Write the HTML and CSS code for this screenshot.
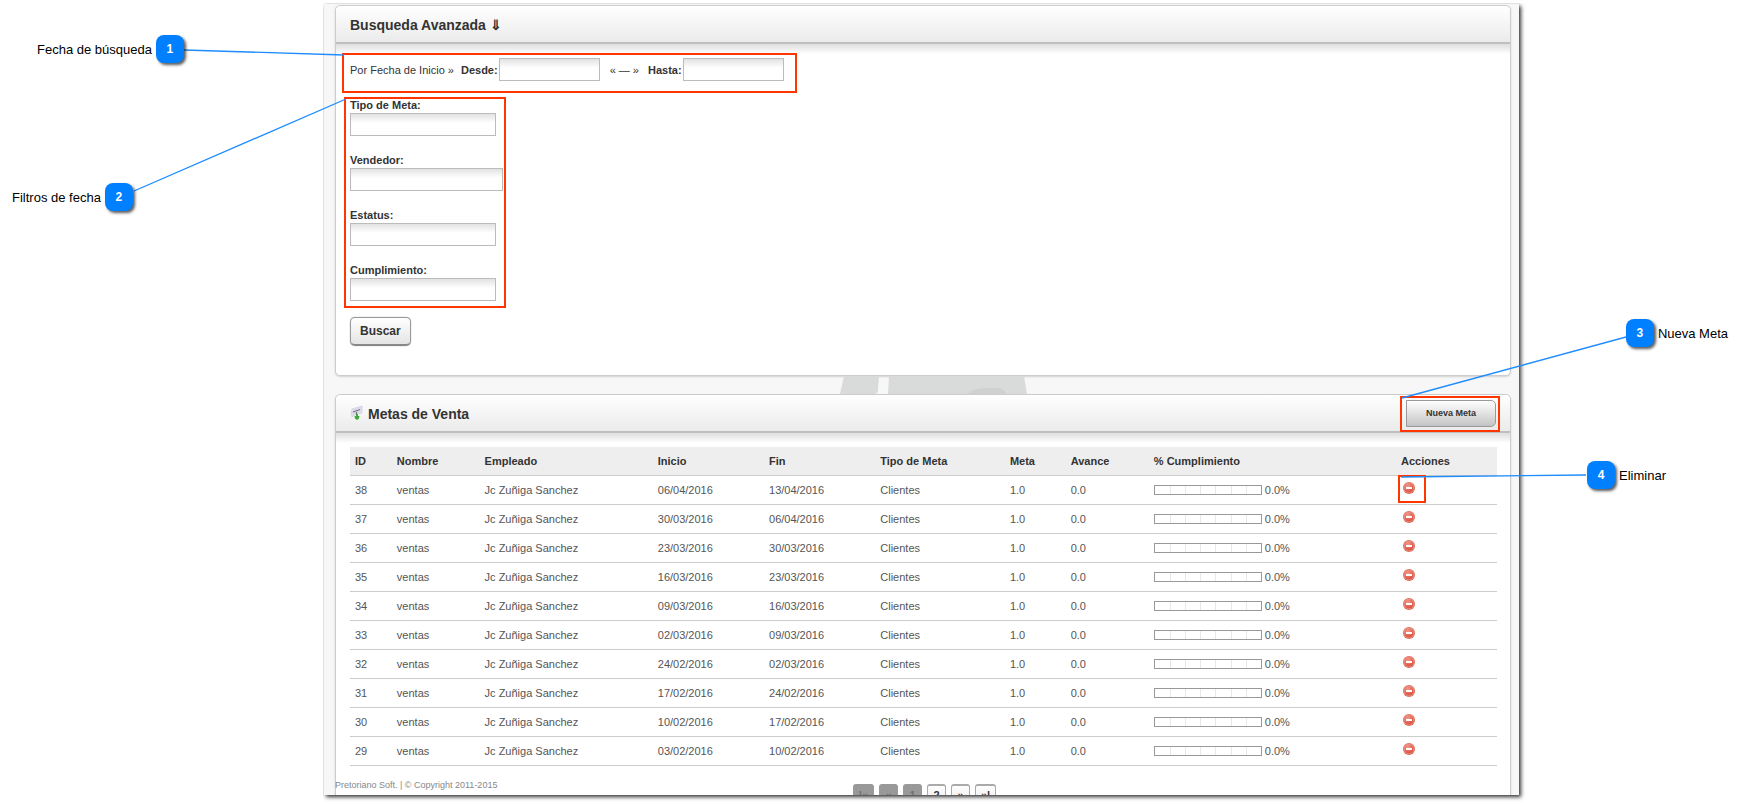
FILE: index.html
```
<!DOCTYPE html>
<html lang="es">
<head>
<meta charset="utf-8">
<title>Metas de Venta</title>
<link rel="stylesheet" href="styles.css">
</head>
<body>
<svg class="defs" width="0" height="0" aria-hidden="true">
  <defs>
    <radialGradient id="red" cx="0.4" cy="0.3" r="0.8">
      <stop offset="0" stop-color="#f29a8e"/><stop offset="0.6" stop-color="#e2604f"/><stop offset="1" stop-color="#d04a3c"/>
    </radialGradient>
    <symbol id="remove" viewBox="0 0 12 12">
      <circle cx="6" cy="6" r="6" fill="#d9614f"/>
      <circle cx="6" cy="6" r="5" fill="url(#red)" stroke="#f3b3a8" stroke-width="0.6"/>
      <rect x="3" y="5" width="6" height="2" fill="#fff"/>
    </symbol>
  </defs>
</svg>

<main class="frame">
  <section class="panel">
    <header class="panel-head"><h2>Busqueda Avanzada ⇓</h2></header>
    <form class="panel-body search">
      <div class="dates">
        <span>Por Fecha de Inicio »</span>
        <label class="desde" for="desde">Desde:</label>
        <input class="date" id="desde" type="text">
        <span class="sep">« — »</span>
        <label class="hasta" for="hasta">Hasta:</label>
        <input class="date" id="hasta" type="text">
        <span class="mark mark-dates"></span>
      </div>
      <div class="filters">
        <div class="field"><label for="tipo">Tipo de Meta:</label><select id="tipo"></select></div>
        <div class="field wide"><label for="vendedor">Vendedor:</label><select id="vendedor"></select></div>
        <div class="field"><label for="estatus">Estatus:</label><select id="estatus"></select></div>
        <div class="field"><label for="cumplimiento">Cumplimiento:</label><select id="cumplimiento"></select></div>
        <span class="mark mark-filters"></span>
      </div>
      <button class="submit" type="button">Buscar</button>
    </form>
  </section>

  <div class="gap">
    <svg width="188" height="18" viewBox="0 0 188 18" aria-hidden="true">
      <path d="M4 0H39L38 14Q38 18 34 18H0Z" fill="#d9dbda"/>
      <path d="M49 0H184L187 18H48Z" fill="#d9dbda"/>
      <path d="M127 18Q135 12 146 12H158Q165 13 166 18Z" fill="#cfd0cf"/>
    </svg>
  </div>

  <section class="panel">
    <header class="panel-head">
      <svg class="title-icon" width="14" height="16" viewBox="0 0 14 16" aria-hidden="true">
        <path d="M2 4L12 1V8L6 9L2 12L1 8Z" fill="#dcdcec" stroke="#d0d0e2" stroke-width="0.8"/>
        <path d="M3 7L10 4.5M6.5 7V10" stroke="#777" stroke-width="1.2" fill="none"/>
        <path d="M6 9H8V11H9.5L9 13.5L7 15L5 13.5L4.5 11H6Z" fill="#3daa35"/>
      </svg>
      <h2>Metas de Venta</h2>
      <div class="new-wrap">
        <button class="new" type="button">Nueva Meta</button>
        <span class="mark mark-new"></span>
      </div>
    </header>
    <div class="panel-body">
      <table>
        <colgroup><col class="c-id"><col class="c-name"><col class="c-emp"><col class="c-date"><col class="c-date"><col class="c-type"><col class="c-goal"><col class="c-adv"><col class="c-pct"><col></colgroup>
        <thead><tr><th>ID</th><th>Nombre</th><th>Empleado</th><th>Inicio</th><th>Fin</th><th>Tipo de Meta</th><th>Meta</th><th>Avance</th><th>% Cumplimiento</th><th>Acciones</th></tr></thead>
        <tbody id="rows"></tbody>
      </table>
      <nav class="pager" aria-label="Paginación">
        <button type="button" disabled>|«</button>
        <button type="button" disabled>«</button>
        <button type="button" disabled>1</button>
        <button type="button">2</button>
        <button type="button">»</button>
        <button type="button">»|</button>
      </nav>
    </div>
  </section>
  <footer class="foot">Pretoriano Soft. | © Copyright 2011-2015</footer>
</main>

<svg class="lines lines-left" width="360" height="220" aria-hidden="true">
  <path d="M184 50L344 55M134 191L346 99"/>
</svg>
<svg class="lines lines-right" width="343" height="500" aria-hidden="true">
  <path d="M226 337L2 398M186 475L1 477"/>
</svg>
<div class="note note-1"><span>Fecha de búsqueda</span><b>1</b></div>
<div class="note note-2"><span>Filtros de fecha</span><b>2</b></div>
<div class="note note-3"><b>3</b><span>Nueva Meta</span></div>
<div class="note note-4"><b>4</b><span>Eliminar</span></div>
<script src="rows.js"></script>
</body>
</html>
```

FILE: styles.css
```
* { box-sizing: border-box; }
body {
  margin: 0;
  height: 100vh;
  padding: 4px 224px 9px 324px;
  position: relative;
  overflow: hidden;
  background: #fff;
  color: #333;
  font: 11px/14px "Liberation Sans", Arial, sans-serif;
}
.defs { position: absolute; }
.frame {
  position: relative;
  height: 100%;
  overflow: hidden;
  padding: 1px 8px 0 11px;
  background: #f7f7f7;
}
body::before {
  content: "";
  position: absolute;
  inset: 4px 224px 9px 324px;
  box-shadow: 2px 2px 4px rgba(0, 0, 0, 0.8), 0 0 1px rgba(0, 0, 0, 0.2);
  clip-path: inset(-1px -10px -10px -1px);
}
.panel {
  border: 1px solid #ccc;
  border-radius: 5px;
  background: #fff;
  box-shadow: 0 1px 2px rgba(0, 0, 0, 0.15);
}
.panel-head {
  display: flex;
  align-items: center;
  height: 38px;
  padding: 0 14px;
  border-bottom: 2px solid #bfbfbf;
  border-radius: 5px 5px 0 0;
  background: linear-gradient(#fff, #ebebeb);
}
h2 { margin: 0; padding-top: 2px; font-size: 14px; line-height: 18px; }
.title-icon { margin-right: 4px; }
.panel-body {
  padding: 14px 13px 14px 14px;
  background: linear-gradient(#dedede, #fff 10px);
  border-radius: 0 0 5px 5px;
}
.search {
  display: flex;
  flex-direction: column;
  align-items: flex-start;
  padding-bottom: 29px;
}
.dates { position: relative; display: flex; align-items: center; margin-bottom: 17px; }
label { font-weight: bold; }
.desde { margin: 0 1px 0 7px; }
.sep { margin: 0 9px 0 10px; }
.hasta { margin-right: 1px; }
.date, select {
  appearance: none;
  height: 23px;
  margin: 0;
  padding: 0 4px;
  border: 1px solid #bbb;
  border-radius: 0;
  background: linear-gradient(#e2e2e2, #fff 9px);
  font: inherit;
}
.date { width: 101px; }
.filters { position: relative; display: grid; gap: 17px; margin-bottom: 16px; width: 153px; }
.field { display: flex; flex-direction: column; width: 146px; }
.field label { line-height: 15px; }
.wide { width: 153px; }
.mark { position: absolute; border: 2px solid #ff3600; pointer-events: none; }
.mark-dates { inset: -5px -13px -12px -8px; }
.mark-filters { inset: -1px -3px -7px -6px; }
.mark-new { inset: -4px -4px -5px -6px; }
.mark-delete { inset: -7px -11px -9px -5px; }
.submit {
  height: 29px;
  padding: 0 9px;
  border: 1px solid #999;
  border-bottom: 2px solid #888;
  border-radius: 5px;
  background: linear-gradient(#fff, #e4e4e4);
  box-shadow: 0 0 1px #777;
  color: #333;
  font: bold 12px/16px "Liberation Sans", Arial, sans-serif;
}
.gap { display: flex; justify-content: center; height: 18px; padding-left: 22px; }
.new-wrap { position: relative; display: flex; margin-left: auto; }
.new {
  width: 90px;
  height: 27px;
  padding: 0;
  border: 1px solid #999;
  border-radius: 0 5px 5px 0;
  background: linear-gradient(#fff, #c4c4c4);
  color: #333;
  font: bold 9px/12px "Liberation Sans", Arial, sans-serif;
}
table { width: 100%; table-layout: fixed; border-collapse: separate; border-spacing: 0; }
.c-id { width: 3.65%; }
.c-name { width: 7.65%; }
.c-emp { width: 15.1%; }
.c-date { width: 9.7%; }
.c-type { width: 11.3%; }
.c-goal { width: 5.3%; }
.c-adv { width: 7.25%; }
.c-pct { width: 21.55%; }
th, td { height: 29px; padding: 0 5px; border-bottom: 1px solid #ccc; text-align: left; vertical-align: middle; }
th { background: #eee; }
td { color: #555; }
.progress { display: flex; align-items: center; gap: 3px; }
.bar {
  display: grid;
  grid-template-columns: repeat(7, 1fr);
  width: 108px;
  height: 10px;
  border: 1px solid #999;
}
.bar i + i { border-left: 1px solid #e8e8e8; }
.delete {
  position: relative;
  display: block;
  width: 12px;
  height: 12px;
  margin: 0 0 4px 2px;
  padding: 0;
  border: 0;
  background: none;
}
.delete svg { display: block; }
.pager { display: flex; justify-content: center; gap: 5px; margin-top: 18px; padding-left: 2px; }
.pager button {
  min-width: 19px;
  height: 20px;
  padding: 0 5px;
  border: 1px solid #aaa;
  border-top-width: 2px;
  border-radius: 3px;
  background: linear-gradient(#fff, #e8e8e8);
  color: #333;
  font: bold 11px/14px "Liberation Sans", Arial, sans-serif;
}
.pager button:disabled { border-color: #999; background: #999; color: #707070; }
.foot { position: absolute; left: 11px; bottom: 4px; color: #888; font-size: 9px; line-height: 12px; }
.lines { position: absolute; top: 0; pointer-events: none; }
.lines path { fill: none; stroke: #1e8cff; stroke-width: 1.3; }
.lines-left { left: 0; }
.lines-right { right: 0; }
.note { position: absolute; display: flex; align-items: center; gap: 4px; color: #000; font-size: 13px; line-height: 16px; }
.note span { padding-top: 1px; }
.note b {
  width: 28px;
  height: 28px;
  border-radius: 8px;
  background: #0080ff;
  box-shadow: 2px 2px 3px rgba(0, 0, 0, 0.65);
  color: #fff;
  font-size: 12px;
  line-height: 29px;
  text-align: center;
}
.note-1 { left: 37px; top: 35px; }
.note-2 { left: 12px; top: 183px; }
.note-3 { right: 15px; top: 319px; }
.note-4 { right: 77px; top: 461px; }
```

FILE: rows.js
```
const dates = ["13/04/2016", "06/04/2016", "30/03/2016", "23/03/2016", "16/03/2016", "09/03/2016", "02/03/2016", "24/02/2016", "17/02/2016", "10/02/2016", "03/02/2016"];
const body = document.getElementById("rows");
for (let i = 0; i < 10; i++) {
  const id = 38 - i;
  const mark = i === 0 ? '<span class="mark mark-delete"></span>' : "";
  body.insertAdjacentHTML("beforeend", `<tr><td>${id}</td><td>ventas</td><td>Jc Zuñiga Sanchez</td><td>${dates[i + 1]}</td><td>${dates[i]}</td><td>Clientes</td><td>1.0</td><td>0.0</td><td><div class="progress"><span class="bar">${"<i></i>".repeat(7)}</span>0.0%</div></td><td><button class="delete" type="button" aria-label="Eliminar ${id}"><svg width="12" height="12"><use href="#remove"/></svg>${mark}</button></td></tr>`);
}
```
